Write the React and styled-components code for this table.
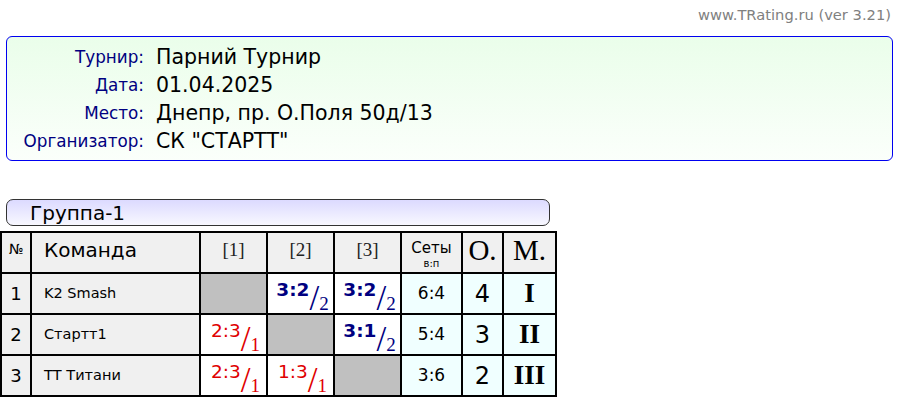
import React from 'react';
import styled, { createGlobalStyle } from 'styled-components';

const GlobalStyle = createGlobalStyle`
  body {
    margin: 0;
    background: #fff;
    font-family: Tahoma, "DejaVu Sans", Verdana, sans-serif;
  }
`;

const Page = styled.div`
  width: 900px;
  height: 399px;
  overflow: hidden;
`;

const Credit = styled.div`
  height: 30px;
  line-height: 30px;
  padding-right: 9px;
  text-align: right;
  color: #808080;
  font-size: 14.7px;
`;

const InfoBox = styled.div`
  margin: 6px 7px 0 6px;
  padding: 6px 0 5px;
  border: 1px solid #0000f0;
  border-radius: 6px;
  background: linear-gradient(#eafeea, #fbfffb);
  display: grid;
  grid-template-columns: 137px 1fr;
  column-gap: 12px;
  grid-auto-rows: 28px;
  align-items: center;
`;

const Label = styled.div`
  text-align: right;
  color: #000080;
  font-size: 16.8px;
`;

const Value = styled.div`
  color: #000;
  font-size: 20.5px;
`;

const GroupBar = styled.div`
  margin: 38px 0 0 6px;
  width: 544px;
  height: 27px;
  border: 1px solid #333;
  border-radius: 7px;
  background: linear-gradient(#dcdaff, #f8f8ff);
  padding-left: 23px;
  box-sizing: border-box;
  font-size: 20px;
  line-height: 26px;
  color: #000;
`;

const Grid = styled.div`
  margin-top: 5px;
  width: 557px;
  box-sizing: border-box;
  padding: 2px;
  background: #000;
  display: grid;
  grid-template-columns: 28px 167px 65px 65px 65px 59px 39px 51px;
  grid-auto-rows: 39px;
  gap: 2px;
`;

const Cell = styled.div`
  background: ${p => p.$bg || '#fff'};
  display: flex;
  flex-direction: ${p => (p.$stack ? 'column' : 'row')};
  align-items: center;
  justify-content: ${p => (p.$left ? 'flex-start' : 'center')};
  padding-left: ${p => (p.$left ? '12px' : '0')};
  padding-bottom: ${p => p.$lift || 0}px;
  box-sizing: border-box;
  color: #000;
  font-size: ${p => p.$size || 14}px;
  line-height: 1;
`;

const Serif = styled.span`
  font-family: "Liberation Serif", "Times New Roman", serif;
  font-size: ${p => p.$size}px;
  font-weight: ${p => (p.$bold ? 700 : 400)};
  color: ${p => p.$color || '#000'};
`;

const SmallNote = styled.span`
  font-size: 10px;
  margin-top: 3px;
`;

const Score = styled.div`
  display: flex;
  align-items: flex-start;
  height: 100%;
  padding: 7px 0 0 4px;
  box-sizing: border-box;
  color: ${p => (p.$win ? '#000080' : '#e00000')};
`;

const ScoreMain = styled.span`
  font-size: 18.5px;
  font-weight: ${p => (p.$win ? 700 : 400)};
  line-height: 1;
`;

const Slash = styled.span`
  font-family: "Liberation Serif", "Times New Roman", serif;
  font-size: 35px;
  line-height: 1;
  margin: 0 0 0 0;
`;

const Sub = styled.span`
  font-family: "Liberation Serif", "Times New Roman", serif;
  font-size: 19px;
  line-height: 1;
  margin: 13px 0 0 0;
`;

const info = [
  ['Турнир:', 'Парний Турнир'],
  ['Дата:', '01.04.2025'],
  ['Место:', 'Днепр, пр. О.Поля 50д/13'],
  ['Организатор:', 'СК "СТАРТТ"'],
];

const teams = [
  { n: 1, name: 'K2 Smash', games: [null, ['3:2', 2], ['3:2', 2]], sets: '6:4', pts: 4, place: 'I' },
  { n: 2, name: 'Стартт1', games: [['2:3', 1], null, ['3:1', 2]], sets: '5:4', pts: 3, place: 'II' },
  { n: 3, name: 'ТТ Титани', games: [['2:3', 1], ['1:3', 1], null], sets: '3:6', pts: 2, place: 'III' },
];

const HEAD = '#f0f0f0';
const SUM = '#f0ffff';

const GameCell = ({ game }) => {
  if (!game) return <Cell $bg="#c0c0c0" />;
  const win = game[1] === 2;
  return (
    <Cell>
      <Score $win={win}>
        <ScoreMain $win={win}>{game[0]}</ScoreMain>
        <Slash>/</Slash>
        <Sub>{game[1]}</Sub>
      </Score>
    </Cell>
  );
};

export default function App() {
  return (
    <Page>
      <GlobalStyle />
      <Credit>www.TRating.ru (ver 3.21)</Credit>
      <InfoBox>
        {info.map(([l, v]) => (
          <React.Fragment key={l}>
            <Label>{l}</Label>
            <Value>{v}</Value>
          </React.Fragment>
        ))}
      </InfoBox>
      <GroupBar>Группа-1</GroupBar>
      <Grid>
        <Cell $bg={HEAD} $lift={8}>№</Cell>
        <Cell $bg={HEAD} $left $size={20} $lift={6}>Команда</Cell>
        {[1, 2, 3].map(i => (
          <Cell key={i} $bg={HEAD} $lift={6}>
            <Serif $size={19} $color="#222">[{i}]</Serif>
          </Cell>
        ))}
        <Cell $bg={HEAD} $stack $size={15}>
          <span style={{ marginTop: 5 }}>Сеты</span>
          <SmallNote>в:п</SmallNote>
        </Cell>
        <Cell $bg={HEAD} $lift={4}><Serif $size={29}>О.</Serif></Cell>
        <Cell $bg={HEAD} $lift={4}><Serif $size={29}>М.</Serif></Cell>
        {teams.map(t => (
          <React.Fragment key={t.n}>
            <Cell $bg={HEAD} $size={18}>{t.n}</Cell>
            <Cell $bg={HEAD} $left $size={14.5}>{t.name}</Cell>
            {t.games.map((g, i) => <GameCell key={i} game={g} />)}
            <Cell $bg={SUM} $size={17}>{t.sets}</Cell>
            <Cell $bg={SUM} $size={24}>{t.pts}</Cell>
            <Cell $bg={SUM}><Serif $size={27} $bold>{t.place}</Serif></Cell>
          </React.Fragment>
        ))}
      </Grid>
    </Page>
  );
}
